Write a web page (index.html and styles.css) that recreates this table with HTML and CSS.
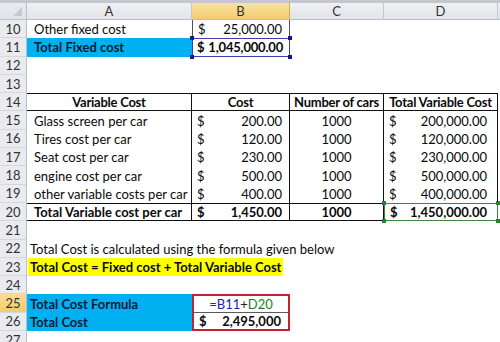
FILE: index.html
```html
<!DOCTYPE html>
<html>
<head>
<meta charset="utf-8">
<link rel="stylesheet" href="styles.css">
</head>
<body>
<div class="sheet">
  <div class="corner"><span class="tri"></span></div>
  <div class="ch">A</div><div class="ch hl">B</div><div class="ch">C</div><div class="ch">D</div><div class="ch end"></div>

  <div class="rh">10</div><div class="c">Other fixed cost</div><div class="c acc pb b10"><span>$</span><span>25,000.00</span></div><div class="c"></div><div class="c"></div><div class="c"></div>

  <div class="rh">11</div><div class="c blue bold">Total Fixed cost</div><div class="c acc tight bold selb"><span>$</span><span>1,045,000.00</span><i class="h tl"></i><i class="h tr"></i><i class="h bl"></i><i class="h br"></i></div><div class="c"></div><div class="c"></div><div class="c"></div>

  <div class="rh">12</div><div class="c"></div><div class="c"></div><div class="c"></div><div class="c"></div><div class="c"></div>
  <div class="rh">13</div><div class="c"></div><div class="c"></div><div class="c"></div><div class="c"></div><div class="c"></div>

  <div class="rh">14</div><div class="c t th bold center vr">Variable Cost</div><div class="c t th bold center vr">Cost</div><div class="c t th bold center vr">Number of cars</div><div class="c t th bold center vr">Total Variable Cost</div><div class="c"></div>

  <div class="rh">15</div><div class="c vr">Glass screen per car</div><div class="c acc pb vr"><span>$</span><span>200.00</span></div><div class="c center vr">1000</div><div class="c acc pd vr"><span>$</span><span>200,000.00</span></div><div class="c"></div>
  <div class="rh">16</div><div class="c vr">Tires cost per car</div><div class="c acc pb vr"><span>$</span><span>120.00</span></div><div class="c center vr">1000</div><div class="c acc pd vr"><span>$</span><span>120,000.00</span></div><div class="c"></div>
  <div class="rh">17</div><div class="c vr">Seat cost per car</div><div class="c acc pb vr"><span>$</span><span>230.00</span></div><div class="c center vr">1000</div><div class="c acc pd vr"><span>$</span><span>230,000.00</span></div><div class="c"></div>
  <div class="rh">18</div><div class="c vr">engine cost per car</div><div class="c acc pb vr"><span>$</span><span>500.00</span></div><div class="c center vr">1000</div><div class="c acc pd vr"><span>$</span><span>500,000.00</span></div><div class="c"></div>
  <div class="rh">19</div><div class="c vr">other variable costs per car</div><div class="c acc pb vr"><span>$</span><span>400.00</span></div><div class="c center vr">1000</div><div class="c acc pd vr"><span>$</span><span>400,000.00</span></div><div class="c"></div>

  <div class="rh">20</div><div class="c t tb bold vr">Total Variable cost per car</div><div class="c t tb acc pb bold vr"><span>$</span><span>1,450.00</span></div><div class="c t tb bold center vr">1000</div><div class="c t tb acc pd bold vr selg"><span>$</span><span>1,450,000.00</span><i class="g tl"></i><i class="g tr"></i><i class="g bl"></i><i class="g br"></i></div><div class="c"></div>

  <div class="rh">21</div><div class="c"></div><div class="c"></div><div class="c"></div><div class="c"></div><div class="c"></div>
  <div class="rh">22</div><div class="c over">Total Cost is calculated using the formula given below</div><div class="c"></div><div class="c"></div><div class="c"></div><div class="c"></div>
  <div class="rh">23</div><div class="c over ybox"><span class="yellow bold">Total Cost = Fixed cost + Total Variable Cost</span></div><div class="c"></div><div class="c"></div><div class="c"></div><div class="c"></div>
  <div class="rh">24</div><div class="c"></div><div class="c"></div><div class="c"></div><div class="c"></div><div class="c"></div>
  <div class="rh hl">25</div><div class="c blue blue2 bold">Total Cost Formula</div><div class="c center red1"><span class="fb">=B11</span><span class="fo">+</span><span class="fg">D20</span></div><div class="c"></div><div class="c"></div><div class="c"></div>
  <div class="rh">26</div><div class="c blue blue2 bold">Total Cost</div><div class="c acc pb bold red2"><span>$</span><span>2,495,000</span></div><div class="c"></div><div class="c"></div><div class="c"></div>
  <div class="rh">27</div><div class="c"></div><div class="c"></div><div class="c"></div><div class="c"></div><div class="c"></div>
</div>
</body>
</html>
```
FILE: styles.css
```css
html, body {
  margin: 0;
  padding: 0;
  background: #ffffff;
}
body {
  width: 500px;
  height: 342px;
  overflow: hidden;
  font-family: Lato, "Liberation Sans", sans-serif;
  font-size: 13px;
  color: #0a0a0a;
}
.sheet {
  display: grid;
  grid-template-columns: 27px 165px 98px 94px 114px 1fr;
  grid-template-rows: 20px repeat(18, 18.3px);
}
.corner {
  position: relative;
  background: linear-gradient(#e9ebee, #dfe2e6);
  border-top: 3px solid #c4c8ce;
  border-right: 1px solid #b9bec6;
  border-bottom: 1px solid #b9bec6;
  box-sizing: border-box;
}
.tri {
  position: absolute;
  right: 4px;
  bottom: 3px;
  width: 0;
  height: 0;
  border-left: 9px solid transparent;
  border-bottom: 9px solid #c5c9ce;
}
.ch {
  display: flex;
  align-items: center;
  justify-content: center;
  box-sizing: border-box;
  background: linear-gradient(#eef0f2, #e1e4e8);
  border-top: 3px solid #c4c8ce;
  border-right: 1px solid #c3c8ce;
  border-bottom: 1px solid #b9bec6;
  color: #333;
  font-size: 13px;
}
.ch.hl {
  background: linear-gradient(#fae2a2, #f4cc6c);
  border-right-color: #d6ad55;
}
.ch.end { border-right: none; }
.rh {
  display: flex;
  align-items: center;
  justify-content: center;
  box-sizing: border-box;
  background: #e9ebee;
  border-right: 1px solid #b9bec6;
  border-bottom: 1px solid #d4d8dd;
  color: #333;
  font-size: 13px;
}
.rh.hl {
  background: linear-gradient(#f9dd95, #f3cb6c);
}
.c {
  position: relative;
  display: flex;
  align-items: center;
  box-sizing: border-box;
  padding-left: 7px;
  white-space: nowrap;
  min-width: 0;
}
.bold { font-weight: 700; }
.center { justify-content: center; padding-left: 0; }
.acc { justify-content: space-between; padding-left: 5px; }
.pb { padding-right: 7px; }
.pd { padding-right: 10px; }
.tight {
  padding-left: 4px;
  padding-right: 6px;
  gap: 4px;
  letter-spacing: -0.2px;
}
.b10 {
  border-left: 1px solid #555;
  border-right: 1px solid #555;
}
.blue {
  background: #00b0f0;
  color: #0b1a36;
}
.blue2 { padding-left: 3px; }
.selb {
  border: 1px solid #3e3eb0;
}
.h, .g {
  position: absolute;
  width: 4px;
  height: 4px;
  background: #14148c;
}
.g { background: #2e7d32; }
.tl { left: -3px; top: -3px; }
.tr { right: -3px; top: -3px; }
.bl { left: -3px; bottom: -3px; }
.br { right: -3px; bottom: -3px; }
.t { border-top: 1px solid #111; }
.th {
  border-bottom: 1px solid #111;
  letter-spacing: -0.25px;
}
.tb { border-bottom: 1px solid #111; }
.vr { border-right: 1px solid #111; }
.selg {
  border: 1px solid #3a8a3a;
}
.over {
  overflow: visible;
  padding-left: 3px;
}
.ybox { padding-left: 1px; }
.yellow {
  background: #ffff00;
  padding: 1px 2px;
}
.red1 {
  border: 2px solid #c8202c;
  border-bottom: 1px solid #5a5a5a;
}
.red2 {
  border: 2px solid #c8202c;
  border-top: none;
}
.fb { color: #2323b4; }
.fo { color: #222; }
.fg { color: #1d7f27; }
```
